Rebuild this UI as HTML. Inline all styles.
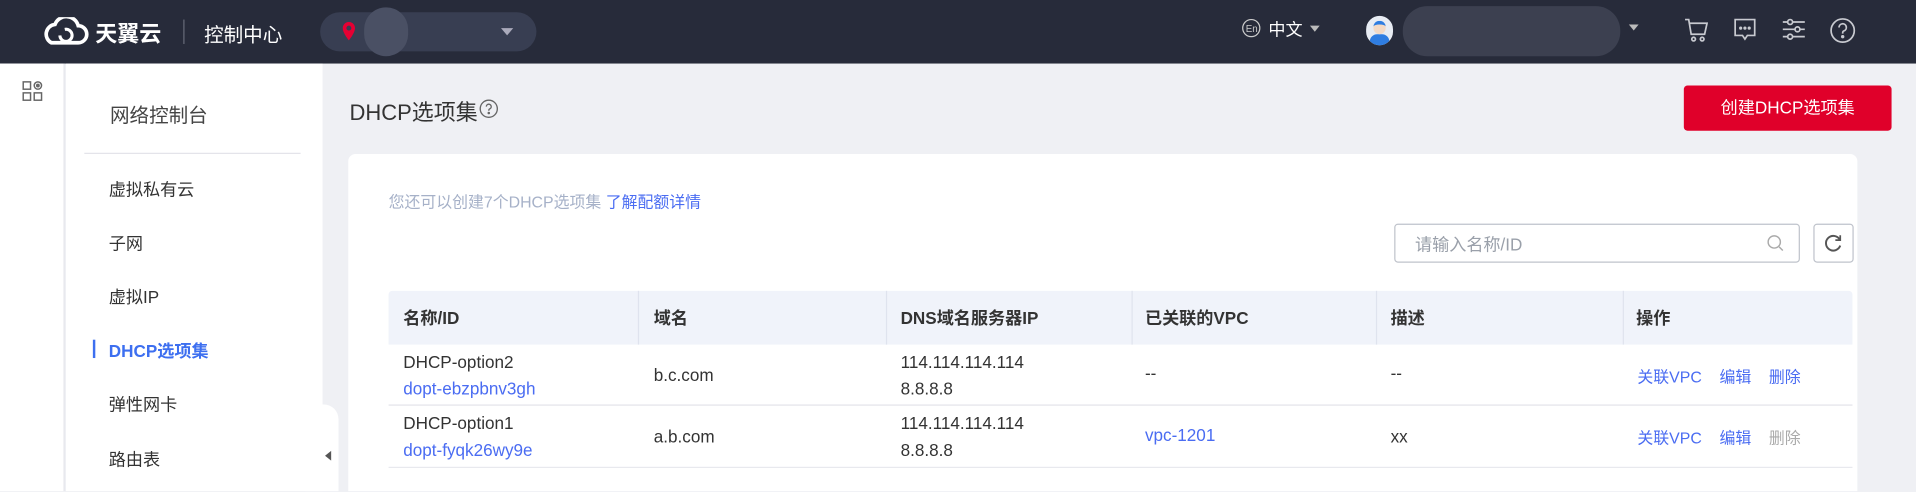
<!DOCTYPE html>
<html><head><meta charset="utf-8"><style>
*{margin:0;padding:0;box-sizing:border-box}
html,body{width:1916px;height:492px;overflow:hidden;background:#eff0f4}
#w{position:absolute;left:0;top:0;width:1568px;height:402px;transform:scale(1.22194);transform-origin:0 0;font-family:"Liberation Sans","Noto Sans CJK SC",sans-serif;color:#333;background:#eff0f4;overflow:hidden}
.a{position:absolute}
.hd{left:0;top:0;width:1568px;height:52px;background:#272b3a}
.t{white-space:nowrap}
.mi{left:89px;font-size:14px;color:#333}
.th{top:238px;height:44px;line-height:44px;font-size:14px;font-weight:bold;color:#333}
.td{font-size:14px;color:#333}
.bl{color:#4a6cf2}
.sep{top:238px;width:1px;height:44px;background:#dfe3ee}
</style></head><body><div id="w">
<div class="a hd"></div>
<svg class="a" style="left:32px;top:14px" width="42" height="24" viewBox="0 0 42 24"><path d="M10 21 H32 A7 7 0 0 0 32 7 A10 10 0 0 0 13 6 A8 8 0 0 0 10 21Z" fill="none" stroke="#fff" stroke-width="3"/><path d="M17 15 a5 5 0 1 0 4 -5" fill="none" stroke="#fff" stroke-width="2.5"/></svg>
<div class="a t" style="left:78px;top:14px;font-size:18px;font-weight:bold;color:#fff">天翼云</div>
<div class="a" style="left:150px;top:16px;width:1px;height:20px;background:#666a78"></div>
<div class="a t" style="left:167px;top:15px;font-size:16px;color:#fff">控制中心</div>
<div class="a" style="left:262px;top:10px;width:177px;height:32px;border-radius:16px;background:#383e52"></div>
<svg class="a" style="left:280px;top:18px" width="11" height="15" viewBox="0 0 11 15"><path d="M5.5 0A5 5 0 0 0 .5 5C.5 9 5.5 15 5.5 15S10.5 9 10.5 5A5 5 0 0 0 5.5 0Z" fill="#e60033"/><circle cx="5.5" cy="5" r="2" fill="#383e52"/></svg>
<div class="a" style="left:298px;top:6px;width:36px;height:40px;border-radius:18px;background:#4a5064"></div>
<div class="a" style="left:410px;top:23px;border:5px solid transparent;border-top:6px solid #aab;border-bottom:0"></div>
<svg class="a" style="left:1016px;top:15px" width="16" height="16"><circle cx="8" cy="8" r="7" fill="none" stroke="#ccc"/><text x="3.5" y="11" font-size="8" fill="#ccc" font-family="Liberation Sans">En</text></svg>
<div class="a t" style="left:1038px;top:14px;font-size:14px;color:#fff">中文</div>
<div class="a" style="left:1072px;top:21px;border:4px solid transparent;border-top:5px solid #bbb;border-bottom:0"></div>
<div class="a" style="left:1118px;top:13px;width:22px;height:24px;border-radius:12px;background:#e8ecf3;overflow:hidden"><div style="position:absolute;left:3px;top:15px;width:16px;height:10px;border-radius:6px 6px 0 0;background:#2f7de1"></div><div style="position:absolute;left:6px;top:4px;width:10px;height:11px;border-radius:5px;background:#f3d9c5;border-top:3px solid #2f7de1"></div></div>
<div class="a" style="left:1148px;top:5px;width:178px;height:41px;border-radius:20px;background:#3c4050"></div>
<div class="a" style="left:1333px;top:20px;border:4px solid transparent;border-top:5px solid #bbb;border-bottom:0"></div>
<svg class="a" style="left:1378px;top:14px" width="20" height="22" fill="none" stroke="#c8cad0" stroke-width="1.4"><path d="M1 2h3l2 12h11l2-9H5"/><circle cx="8" cy="18" r="1.5"/><circle cx="15" cy="18" r="1.5"/></svg>
<svg class="a" style="left:1418px;top:14px" width="20" height="22" fill="none" stroke="#c8cad0" stroke-width="1.4"><path d="M2 2h16v13h-6l-2 3-2-3H2z"/><circle cx="6.5" cy="9" r=".6" fill="#c8cad0"/><circle cx="10" cy="9" r=".6" fill="#c8cad0"/><circle cx="13.5" cy="9" r=".6" fill="#c8cad0"/></svg>
<svg class="a" style="left:1458px;top:14px" width="20" height="22" fill="none" stroke="#c8cad0" stroke-width="1.4"><path d="M1 4h18M1 10h18M1 16h18"/><circle cx="7" cy="4" r="2" fill="#272b3a"/><circle cx="13" cy="10" r="2" fill="#272b3a"/><circle cx="7" cy="16" r="2" fill="#272b3a"/></svg>
<svg class="a" style="left:1497px;top:14px" width="22" height="22" fill="none" stroke="#c8cad0" stroke-width="1.4"><circle cx="11" cy="11" r="9.5"/><path d="M8 8.5a3 3 0 1 1 4 2.8c-1 .5-1 1-1 2.2"/><circle cx="11" cy="16" r=".7" fill="#c8cad0"/></svg>

<div class="a" style="left:0;top:52px;width:53px;height:350px;background:#fff;border-right:1px solid #e3e4ea"></div>
<svg class="a" style="left:18px;top:66px" width="18" height="18" fill="none" stroke="#666" stroke-width="1.2"><rect x="1" y="1" width="6" height="6"/><rect x="1" y="10" width="6" height="6"/><rect x="10" y="10" width="6" height="6"/><circle cx="13" cy="4" r="3"/><circle cx="13" cy="4" r="1" fill="#666"/></svg>
<div class="a" style="left:54px;top:52px;width:210px;height:350px;background:#fff"></div>
<div class="a t" style="left:90px;top:81px;font-size:16px;color:#444">网络控制台</div>
<div class="a" style="left:69px;top:125px;width:177px;height:1px;background:#e3e4ea"></div>
<div class="a t mi" style="top:145px">虚拟私有云</div>
<div class="a t mi" style="top:189px">子网</div>
<div class="a t mi" style="top:233px">虚拟IP</div>
<div class="a" style="left:76px;top:278px;width:2px;height:15px;background:#3d6ff0"></div>
<div class="a t mi" style="top:277px;color:#3d6ff0;font-weight:bold">DHCP选项集</div>
<div class="a t mi" style="top:321px">弹性网卡</div>
<div class="a t mi" style="top:366px">路由表</div>
<div class="a" style="left:250px;top:331px;width:27px;height:71px;border-radius:0 12px 0 0;background:#fff"></div>
<div class="a" style="left:266px;top:369px;border:4px solid transparent;border-right:5px solid #555;border-left:0"></div>

<div class="a t" style="left:286px;top:78px;font-size:18px;color:#333">DHCP选项集</div>
<svg class="a" style="left:392px;top:81px" width="16" height="16" fill="none" stroke="#666" stroke-width="1.1"><circle cx="8" cy="8" r="7"/><path d="M6 6.3a2 2 0 1 1 2.8 1.8c-.7.3-.8.7-.8 1.5"/><circle cx="8" cy="11.5" r=".5" fill="#666"/></svg>
<div class="a t" style="left:1378px;top:70px;width:170px;height:37px;line-height:37px;text-align:center;background:#e0002a;color:#fff;font-size:14px;border-radius:3px">创建DHCP选项集</div>

<div class="a" style="left:285px;top:126px;width:1235px;height:276px;background:#fff;border-radius:6px 6px 0 0"></div>
<div class="a t" style="left:318px;top:155px;font-size:13px;color:#a6b1c8">您还可以创建7个DHCP选项集 <span class="bl">了解配额详情</span></div>
<div class="a" style="left:1141px;top:183px;width:332px;height:32px;border:1px solid #bfc3cb;border-radius:3px"></div>
<div class="a t" style="left:1158px;top:190px;font-size:14px;color:#9aa0aa">请输入名称/ID</div>
<svg class="a" style="left:1446px;top:192px" width="14" height="14" fill="none" stroke="#aaa" stroke-width="1.2"><circle cx="6" cy="6" r="5"/><path d="M10 10l3 3"/></svg>
<div class="a" style="left:1484px;top:183px;width:33px;height:32px;border:1px solid #bfc3cb;border-radius:3px"></div>
<svg class="a" style="left:1493px;top:191px" width="15" height="16" fill="none" stroke="#555" stroke-width="1.6"><path d="M12.5 5A6 6 0 1 0 13 10"/><path d="M13 1.5V5.5H9" stroke-width="1.4"/></svg>

<div class="a" style="left:318px;top:238px;width:1198px;height:44px;background:#f0f3fa;border-radius:3px 3px 0 0"></div>
<div class="a sep" style="left:522px"></div><div class="a sep" style="left:725px"></div><div class="a sep" style="left:926px"></div><div class="a sep" style="left:1126px"></div><div class="a sep" style="left:1328px"></div>
<div class="a t th" style="left:330px">名称/ID</div>
<div class="a t th" style="left:535px">域名</div>
<div class="a t th" style="left:737px">DNS域名服务器IP</div>
<div class="a t th" style="left:937px">已关联的VPC</div>
<div class="a t th" style="left:1138px">描述</div>
<div class="a t th" style="left:1339px">操作</div>
<div class="a" style="left:318px;top:331px;width:1198px;height:1px;background:#e3e4ea"></div>
<div class="a" style="left:318px;top:382px;width:1198px;height:1px;background:#e8e9ee"></div>

<div class="a t td" style="left:330px;top:288px">DHCP-option2</div>
<div class="a t td bl" style="left:330px;top:310px">dopt-ebzpbnv3gh</div>
<div class="a t td" style="left:535px;top:299px">b.c.com</div>
<div class="a t td" style="left:737px;top:288px">114.114.114.114</div>
<div class="a t td" style="left:737px;top:310px">8.8.8.8</div>
<div class="a t td" style="left:937px;top:297px">--</div>
<div class="a t td" style="left:1138px;top:297px">--</div>
<div class="a t td bl" style="left:1340px;top:298px;font-size:13px">关联VPC&nbsp;&nbsp;&nbsp;&nbsp;编辑&nbsp;&nbsp;&nbsp;&nbsp;删除</div>

<div class="a t td" style="left:330px;top:338px">DHCP-option1</div>
<div class="a t td bl" style="left:330px;top:360px">dopt-fyqk26wy9e</div>
<div class="a t td" style="left:535px;top:349px">a.b.com</div>
<div class="a t td" style="left:737px;top:338px">114.114.114.114</div>
<div class="a t td" style="left:737px;top:360px">8.8.8.8</div>
<div class="a t td bl" style="left:937px;top:348px">vpc-1201</div>
<div class="a t td" style="left:1138px;top:349px">xx</div>
<div class="a t td bl" style="left:1340px;top:348px;font-size:13px">关联VPC&nbsp;&nbsp;&nbsp;&nbsp;编辑&nbsp;&nbsp;&nbsp;&nbsp;<span style="color:#aaa">删除</span></div>
</div></body></html>
